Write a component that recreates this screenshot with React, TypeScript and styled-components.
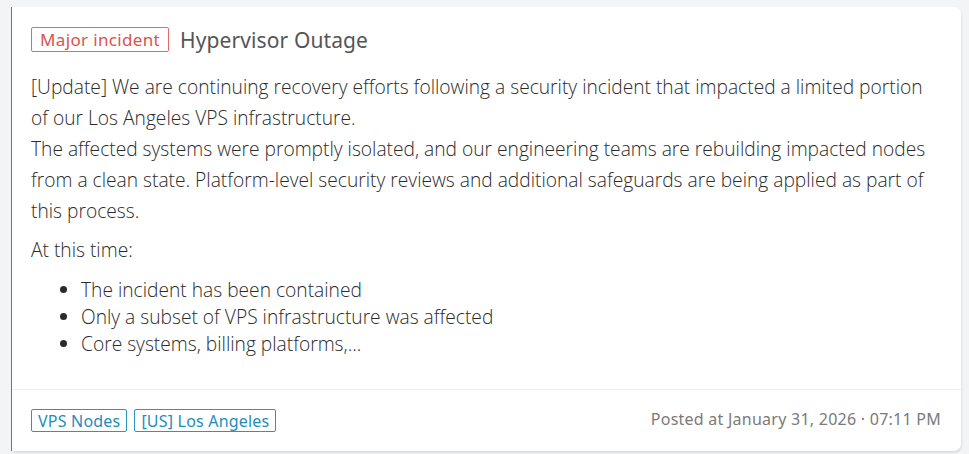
import React from "react";
import styled, { createGlobalStyle } from "styled-components";

const Global = createGlobalStyle`
  html, body { margin: 0; padding: 0; background: #f3f4f6; }
  body { font-family: "Open Sans", "Liberation Sans", sans-serif; }
  * { box-sizing: border-box; }
`;

const Page = styled.div`
  padding: 7px 8px 3px 11px;
  height: 454px;
`;

const Card = styled.article`
  background: #ffffff;
  border-left: 1px solid #ec3f47;
  border-radius: 0 7px 7px 0;
  box-shadow: 1px 2px 3px -1px rgba(0, 0, 0, 0.16);
  height: 444px;
  display: flex;
  flex-direction: column;
`;

const Main = styled.div`
  flex: 1;
  padding: 20px 24px 0 19px;
`;

const Header = styled.div`
  display: flex;
  align-items: center;
  gap: 11px;
  height: 25px;
`;

const Badge = styled.span<{ $tone: "red" | "blue" }>`
  display: inline-flex;
  align-items: center;
  height: ${(p) => (p.$tone === "red" ? "25px" : "23px")};
  padding: 0 ${(p) => (p.$tone === "red" ? "8px" : "6px")};
  border: 1px solid ${(p) => (p.$tone === "red" ? "#e06a6a" : "#2a95bd")};
  color: ${(p) => (p.$tone === "red" ? "#d9534f" : "#1f8db8")};
  border-radius: 2px;
  font-family: "Noto Sans", "Open Sans", sans-serif;
  font-size: ${(p) => (p.$tone === "red" ? "17px" : "16px")};
  letter-spacing: ${(p) => (p.$tone === "red" ? "0.35px" : "0.2px")};
  white-space: nowrap;
`;

const Title = styled.h2`
  margin: 0;
  font-family: "Noto Sans", "Open Sans", sans-serif;
  font-weight: 400;
  font-size: 21px;
  letter-spacing: 0.1px;
  color: #555555;
`;

const Body = styled.div`
  margin-top: 19px;
  color: #2b2b2b;
  font-weight: 300;
  font-size: 19.2px;
`;

const Para = styled.p`
  margin: 0 0 8px;
  line-height: 31px;
`;

const List = styled.ul`
  margin: 11px 0 0;
  padding-left: 50px;
  line-height: 27px;
`;

const Footer = styled.footer`
  border-top: 1px solid #f0f0f0;
  padding: 19px 20px 19px 19px;
  display: flex;
  align-items: center;
  justify-content: space-between;
`;

const Tags = styled.div`
  display: flex;
  gap: 7px;
`;

const Posted = styled.span`
  font-family: "Noto Sans", "Open Sans", sans-serif;
  font-size: 16px;
  letter-spacing: 0.25px;
  color: #7a7a7a;
  margin-top: -4px;
`;

export default function App() {
  return (
    <>
      <Global />
      <Page>
        <Card>
          <Main>
            <Header>
              <Badge $tone="red">Major incident</Badge>
              <Title>Hypervisor Outage</Title>
            </Header>
            <Body>
              <Para>
                [Update] We are continuing recovery efforts following a security incident that impacted a limited portion of our Los Angeles VPS infrastructure.
                <br />
                The affected systems were promptly isolated, and our engineering teams are rebuilding impacted nodes from a clean state. Platform-level security reviews and additional safeguards are being applied as part of this process.
              </Para>
              <Para>At this time:</Para>
              <List>
                <li>The incident has been contained</li>
                <li>Only a subset of VPS infrastructure was affected</li>
                <li>Core systems, billing platforms,...</li>
              </List>
            </Body>
          </Main>
          <Footer>
            <Tags>
              <Badge $tone="blue">VPS Nodes</Badge>
              <Badge $tone="blue">[US] Los Angeles</Badge>
            </Tags>
            <Posted>Posted at January 31, 2026 · 07:11 PM</Posted>
          </Footer>
        </Card>
      </Page>
    </>
  );
}
